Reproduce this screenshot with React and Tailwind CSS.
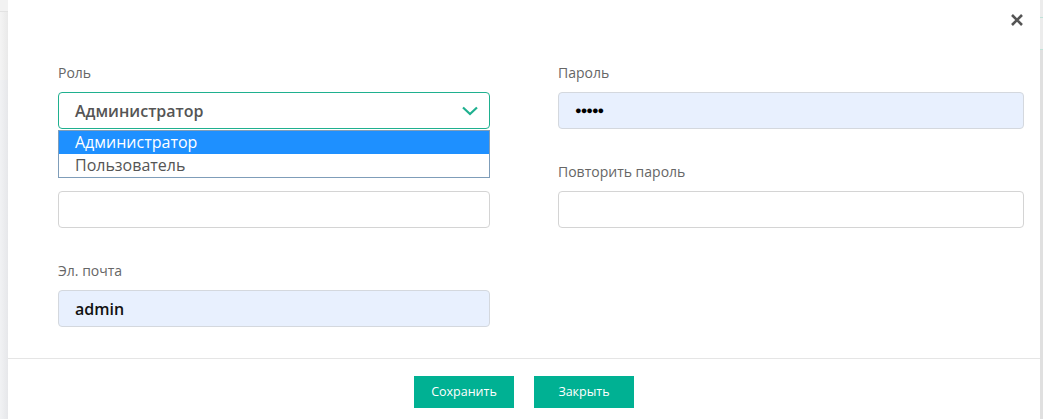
export default function App() {
  const font = { fontFamily: '"Open Sans", "Noto Sans", sans-serif' };
  return (
    <div className="w-[1043px] h-[419px] flex bg-[#e4e4e4] overflow-hidden" style={font}>
      <div className="w-[8px] h-full flex flex-col">
        <div className="h-[12px] bg-[#f2f2f2] border-b border-[#e2e2e2]"></div>
        <div className="h-[68px] bg-gradient-to-r from-[#f4f4f4] to-[#e9e9e9]"></div>
        <div className="flex-1 bg-gradient-to-r from-[#f1f2f4] to-[#e6e7ea]"></div>
      </div>
      <div className="w-[1032px] h-full bg-white flex flex-col relative">
        <div className="h-[63px] flex justify-end items-start pt-[13px] pr-[16px]">
          <svg width="14" height="14" viewBox="0 0 14 14">
            <path d="M2 2 L12 12 M12 2 L2 12" stroke="#555" strokeWidth="2.6" strokeLinecap="butt" />
          </svg>
        </div>
        <div className="pl-[50px] grid grid-cols-[432px_466px] gap-x-[68px] gap-y-[33px]">
          <div className="relative">
            <div className="h-[20px] text-[14px] leading-[20px] text-[#666] mb-[9px]">Роль</div>
            <div className="h-[37px] border border-[#1fb08f] rounded-[4px] flex items-center justify-between pl-[16px] pr-[10px]">
              <span className="text-[16px] font-semibold text-[#555]">Администратор</span>
              <svg width="18" height="10" viewBox="0 0 18 10">
                <path d="M2 1.5 L9 8 L16 1.5" fill="none" stroke="#1fb08f" strokeWidth="2.2" />
              </svg>
            </div>
            <div className="absolute left-0 right-0 top-[67px] z-10 bg-white border border-[#7f9db9] flex flex-col">
              <div className="h-[23px] bg-[#1e90ff] text-white text-[16px] leading-[23px] pl-[16px]">Администратор</div>
              <div className="h-[23px] text-[#555] text-[16px] leading-[23px] pl-[16px]">Пользователь</div>
            </div>
          </div>
          <div>
            <div className="h-[20px] text-[14px] leading-[20px] text-[#666] mb-[9px]">Пароль</div>
            <div className="h-[37px] border border-[#d4d8de] bg-[#e8f0fe] rounded-[4px] flex items-center pl-[16px]">
              <span className="text-[11px] text-black tracking-[-1px] font-bold">●●●●●</span>
            </div>
          </div>
          <div>
            <div className="h-[20px] mb-[9px]"></div>
            <div className="h-[37px] border border-[#d4d4d4] rounded-[4px]"></div>
          </div>
          <div>
            <div className="h-[20px] text-[14px] leading-[20px] text-[#666] mb-[9px]">Повторить пароль</div>
            <div className="h-[37px] border border-[#d4d4d4] rounded-[4px]"></div>
          </div>
          <div>
            <div className="h-[20px] text-[14px] leading-[20px] text-[#666] mb-[9px]">Эл. почта</div>
            <div className="h-[37px] border border-[#d4d8de] bg-[#e8f0fe] rounded-[4px] flex items-center pl-[16px]">
              <span className="text-[16px] font-semibold text-[#111]">admin</span>
            </div>
          </div>
          <div></div>
        </div>
        <div className="mt-[31px] border-t border-[#e5e5e5] pt-[17px] flex justify-center gap-[20px]">
          <button className="w-[100px] h-[32px] bg-[#00b193] text-white text-[12.5px] font-medium">Сохранить</button>
          <button className="w-[100px] h-[32px] bg-[#00b193] text-white text-[12.5px] font-medium">Закрыть</button>
        </div>
      </div>
      <div className="flex-1 h-full flex flex-col bg-[#e2e2e2]">
        <div className="h-[18px] bg-[#ececec] border-b border-[#bfe3d9]"></div>
        <div className="h-[32px] bg-[#ececec] border-b border-[#bfe3d9]"></div>
        <div className="flex-1 bg-[#e0e0e0]"></div>
      </div>
    </div>
  );
}
